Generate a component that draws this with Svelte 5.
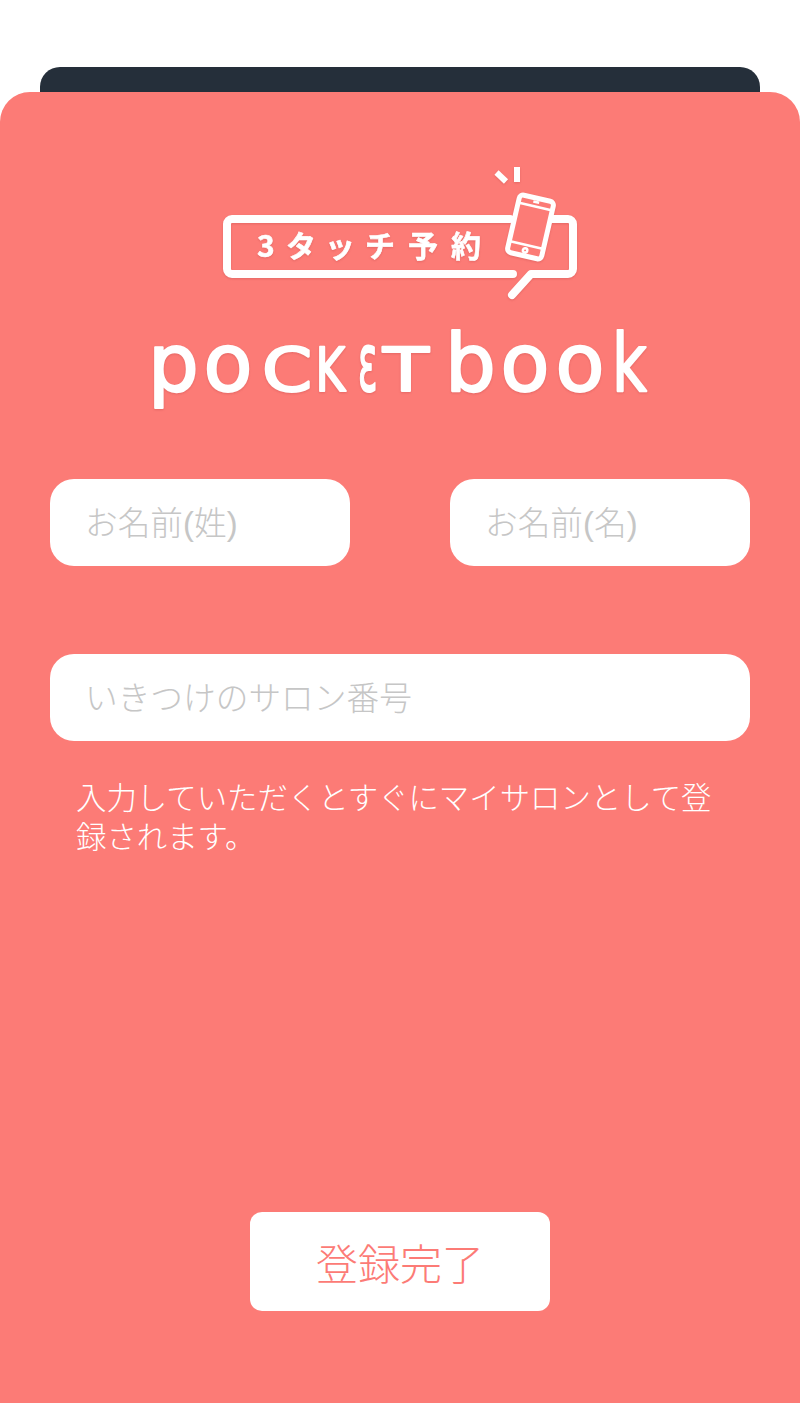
<script>
	let lastName = $state('');
	let firstName = $state('');
	let salonNumber = $state('');
</script>

<div class="page">
	<div class="back-sheet"></div>
	<main class="sheet">
		<svg class="logo" width="500" height="255" viewBox="150 165 500 255" role="img" aria-label="3タッチ予約 pocket book">
			<g class="lines">
				<path d="M510 219H232a5 5 0 0 0-5 5v45a5 5 0 0 0 5 5h281" />
				<path d="M545 219h23a5 5 0 0 1 5 5v45a5 5 0 0 1-5 5h-37l-19 21" />
			</g>
			<g class="ticks">
				<path d="M496.500 172.500l9.500 9" />
				<path d="M517 167v15" />
			</g>
			<g transform="rotate(13 530.500 227)">
				<rect class="phone" x="513" y="197.500" width="35" height="59" rx="4" />
				<path class="phone-line" d="M514 206h33M514 245.500h33" />
				<path class="phone-line" d="M527.500 201.500h6" />
				<circle class="phone-line" cx="530.500" cy="251" r="2.200" />
			</g>
			<text class="badge-text" y="257" x="257 286 325 365 408 451">3タッチ予約</text>
			<text class="wordmark" y="391" x="148 203.500">po</text>
			<text class="wordmark caps" transform="translate(262 391) scale(1.2 1)">C</text>
			<text class="wordmark caps" transform="translate(315.500 391) scale(0.75 1)">K</text>
			<text class="wordmark" transform="translate(358 391) scale(0.45 1)">ε</text>
			<text class="wordmark caps" transform="translate(383 391) scale(1.25 1)">T</text>
			<text class="wordmark" y="391" x="445 500.500 555.500">boo</text>
			<text class="wordmark" transform="translate(612 391) scale(0.75 1)">k</text>
		</svg>

		<div class="name-row">
			<input type="text" placeholder="お名前(姓)" bind:value={lastName} />
			<input type="text" placeholder="お名前(名)" bind:value={firstName} />
		</div>

		<input class="salon" type="text" placeholder="いきつけのサロン番号" bind:value={salonNumber} />
		<p class="note">入力していただくとすぐにマイサロンとして登録されます。</p>

		<button type="button" class="submit">登録完了</button>
	</main>
</div>

<style>
	:global(body) {
		margin: 0;
		background: #ffffff;
	}

	.page {
		display: flex;
		flex-direction: column;
		height: 1403px;
		padding-top: 67px;
		box-sizing: border-box;
		overflow: hidden;
		font-family: "Liberation Sans", "Noto Sans CJK JP", sans-serif;
	}

	.back-sheet {
		flex: 0 0 25px;
		margin: 0 40px;
		background: #252f3a;
		border-radius: 20px 20px 0 0;
	}

	.sheet {
		flex: 1;
		display: flex;
		flex-direction: column;
		padding: 73px 50px 92px;
		background: #fc7b76;
		border-radius: 30px 30px 0 0;
	}

	.logo {
		display: block;
		margin: 0 auto 59px;
		overflow: visible;
		filter: drop-shadow(0 1px 1px rgba(190, 70, 70, 0.35));
	}

	.lines path {
		fill: none;
		stroke: #ffffff;
		stroke-width: 8;
		stroke-linecap: round;
		stroke-linejoin: round;
	}

	.ticks path {
		fill: none;
		stroke: #ffffff;
		stroke-width: 6;
	}

	.phone {
		fill: #fc7b76;
		stroke: #ffffff;
		stroke-width: 5;
	}

	.phone-line {
		fill: none;
		stroke: #ffffff;
		stroke-width: 2.500;
	}

	.badge-text {
		font-family: "Noto Sans CJK JP", sans-serif;
		font-size: 30px;
		font-weight: 700;
		fill: #ffffff;
		stroke: #ffffff;
		stroke-width: 0.6;
		stroke-linejoin: round;
	}

	.wordmark {
		font-family: "DejaVu Sans", sans-serif;
		font-size: 80px;
		fill: #ffffff;
		stroke: #ffffff;
		stroke-width: 2.200;
		stroke-linejoin: round;
	}

	.caps {
		font-size: 60px;
	}

	.name-row {
		display: grid;
		grid-template-columns: 300px 300px;
		justify-content: space-between;
	}

	input {
		display: block;
		box-sizing: border-box;
		width: 100%;
		height: 87px;
		padding: 2px 35px 0;
		border: none;
		border-radius: 24px;
		outline: none;
		background: #ffffff;
		font-family: inherit;
		font-size: 32.700px;
		font-weight: 300;
		color: #333333;
	}

	input::placeholder {
		color: #c6c6c6;
		opacity: 1;
	}

	.salon {
		margin-top: 88px;
	}

	.note {
		margin: 38px 0 0;
		padding: 0 26px;
		font-size: 30.400px;
		font-weight: 300;
		line-height: 39px;
		color: #ffffff;
	}

	.submit {
		align-self: center;
		width: 300px;
		height: 99px;
		margin-top: auto;
		padding: 0;
		border: none;
		border-radius: 12px;
		background: #ffffff;
		font-family: inherit;
		font-size: 42px;
		font-weight: 300;
		color: #fc7b76;
	}
</style>
